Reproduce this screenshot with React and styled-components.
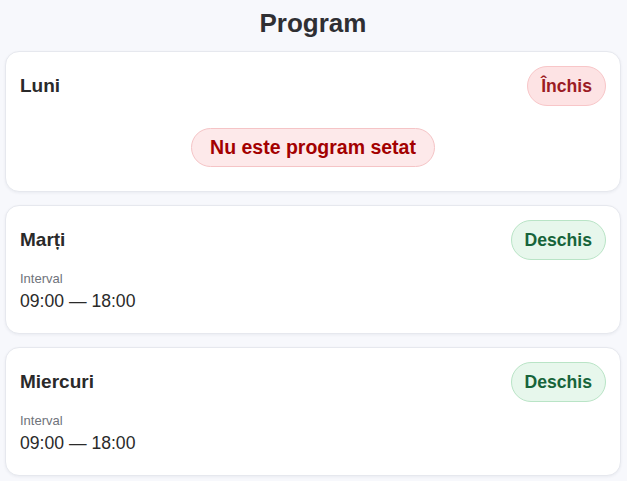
import React from 'react';
import styled, { createGlobalStyle } from 'styled-components';

const GlobalStyle = createGlobalStyle`
  html, body {
    margin: 0;
    padding: 0;
    background: #f7f8fc;
    font-family: "Liberation Sans", Arial, sans-serif;
    color: #2b2b2b;
  }
`;

const Page = styled.div`
  padding: 8px 6px 10px 5px;
`;

const Title = styled.h1`
  margin: 0 0 13px;
  font-size: 26px;
  line-height: 30px;
  font-weight: 700;
  text-align: center;
  color: #2f2f33;
`;

const List = styled.div`
  display: flex;
  flex-direction: column;
  gap: 13px;
`;

const Card = styled.div`
  background: #fff;
  border: 1px solid #e6e8ee;
  border-radius: 14px;
  padding: 14px;
  box-shadow: 0 1px 3px rgba(20, 30, 60, 0.06);
`;

const CardHeader = styled.div`
  display: flex;
  align-items: center;
  justify-content: space-between;
  height: 40px;
`;

const DayName = styled.h3`
  margin: 0;
  font-size: 19px;
  font-weight: 700;
  color: #2a2a2a;
`;

const Badge = styled.span`
  display: inline-block;
  box-sizing: border-box;
  height: 40px;
  padding: 8px 13px;
  line-height: 22px;
  border-radius: 20px;
  font-size: 17.6px;
  font-weight: 700;
  border: 1px solid ${({ open }) => (open ? '#b9e4c6' : '#f8c6c8')};
  background: ${({ open }) => (open ? '#e7f7ec' : '#fde3e4')};
  color: ${({ open }) => (open ? '#17643a' : '#9b1c24')};
`;

const EmptyRow = styled.div`
  display: flex;
  justify-content: center;
  margin: 22px 0 10px;
`;

const EmptyPill = styled.span`
  box-sizing: border-box;
  height: 39px;
  padding: 0 18px;
  line-height: 37px;
  border-radius: 20px;
  border: 1px solid #f5c4c6;
  background: #fde9ea;
  color: #a30000;
  font-size: 19.5px;
  font-weight: 700;
`;

const Body = styled.div`
  padding: 11px 0 8px;
`;

const Label = styled.div`
  font-size: 13px;
  line-height: 15px;
  color: #6f737b;
`;

const Hours = styled.div`
  margin-top: 5px;
  font-size: 17.6px;
  line-height: 20px;
  color: #2a2a2a;
`;

const days = [
  { name: 'Luni', open: false },
  { name: 'Marți', open: true, from: '09:00', to: '18:00' },
  { name: 'Miercuri', open: true, from: '09:00', to: '18:00' },
];

export default function App() {
  return (
    <>
      <GlobalStyle />
      <Page>
        <Title>Program</Title>
        <List>
          {days.map((d) => (
            <Card key={d.name}>
              <CardHeader>
                <DayName>{d.name}</DayName>
                <Badge open={d.open}>{d.open ? 'Deschis' : 'Închis'}</Badge>
              </CardHeader>
              {d.open ? (
                <Body>
                  <Label>Interval</Label>
                  <Hours>{d.from} — {d.to}</Hours>
                </Body>
              ) : (
                <EmptyRow>
                  <EmptyPill>Nu este program setat</EmptyPill>
                </EmptyRow>
              )}
            </Card>
          ))}
        </List>
      </Page>
    </>
  );
}
